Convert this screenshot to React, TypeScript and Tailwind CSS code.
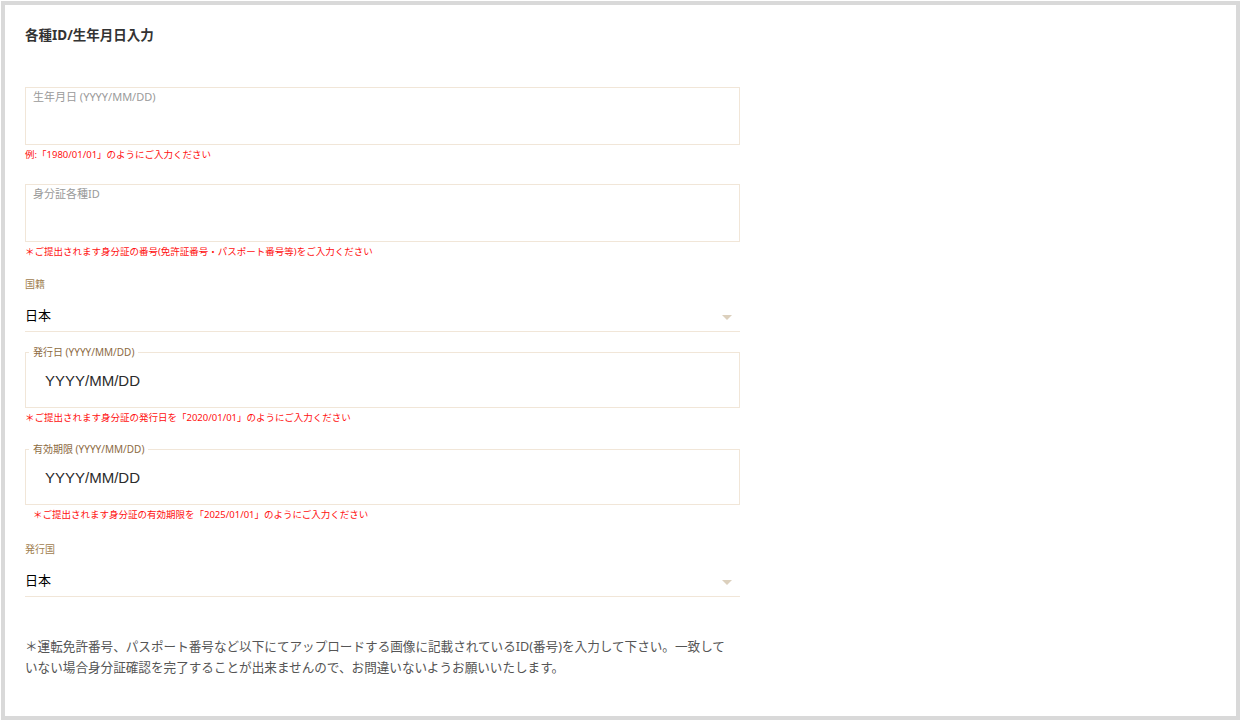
const jp = "font-['Noto_Sans','Noto_Sans_CJK_JP',sans-serif]";

function BoxInput({ label }: { label: string }) {
  return (
    <div className="h-[58px] border border-[#f1e6d8] bg-white px-[7px] pt-[2px]">
      <p className="text-[11px] leading-[14px] text-[#9a9a9a]">{label}</p>
    </div>
  );
}

function Hint({ children, indent = false }: { children: React.ReactNode; indent?: boolean }) {
  return (
    <p className={`mt-[3px] text-[9.5px] leading-[14px] text-[#ff1010] ${indent ? "pl-[8px]" : ""}`}>
      {children}
    </p>
  );
}

function SelectRow({ label, value }: { label: string; value: string }) {
  return (
    <div>
      <p className="text-[10px] leading-[14px] text-[#a0804f]">{label}</p>
      <div className="flex items-center justify-between border-b border-[#f1e6d8] pt-[14px] pb-[6px]">
        <span className="text-[13px] leading-[20px] text-black">{value}</span>
        <span className="mr-[8px] mt-[4px] h-0 w-0 border-x-[5px] border-t-[5px] border-x-transparent border-t-[#dcd0bd]" />
      </div>
    </div>
  );
}

function DateField({ legend }: { legend: string }) {
  return (
    <fieldset className="border border-[#f1e6d8] pb-[16px]">
      <legend className="ml-[3px] px-[4px] text-[10px] leading-[14px] text-[#8c6a3f]">{legend}</legend>
      <div className="pl-[19px] pt-[12px] font-['Liberation_Sans',Arial,sans-serif] text-[15px] leading-[20px] text-[#2b2b2b]">
        YYYY/MM/DD
      </div>
    </fieldset>
  );
}

export default function App() {
  return (
    <div className={`min-h-screen bg-white p-px ${jp}`}>
      <div className="h-[719px] w-[1239px] border-4 border-[#d9d9d9] bg-white px-[20px] pt-[20px]">
        <h1 className="text-[13.5px] font-bold leading-[20px] text-[#333]">各種ID/生年月日入力</h1>

        <div className="w-[715px]">
          <div className="mt-[42px]">
            <BoxInput label="生年月日 (YYYY/MM/DD)" />
            <Hint>例:「1980/01/01」のようにご入力ください</Hint>
          </div>

          <div className="mt-[22px]">
            <BoxInput label="身分証各種ID" />
            <Hint>＊ご提出されます身分証の番号(免許証番号・パスポート番号等)をご入力ください</Hint>
          </div>

          <div className="mt-[18px]">
            <SelectRow label="国籍" value="日本" />
          </div>

          <div className="mt-[13px]">
            <DateField legend="発行日 (YYYY/MM/DD)" />
            <Hint>＊ご提出されます身分証の発行日を「2020/01/01」のようにご入力ください</Hint>
          </div>

          <div className="mt-[17px]">
            <DateField legend="有効期限 (YYYY/MM/DD)" />
            <Hint indent>＊ご提出されます身分証の有効期限を「2025/01/01」のようにご入力ください</Hint>
          </div>

          <div className="mt-[20px]">
            <SelectRow label="発行国" value="日本" />
          </div>

          <p className="mt-[39px] whitespace-nowrap text-[12.6px] leading-[21px] text-[#555]">
            ＊運転免許番号、パスポート番号など以下にてアップロードする画像に記載されているID(番号)を入力して下さい。一致して
            <br />
            いない場合身分証確認を完了することが出来ませんので、お問違いないようお願いいたします。
          </p>
        </div>
      </div>
    </div>
  );
}
